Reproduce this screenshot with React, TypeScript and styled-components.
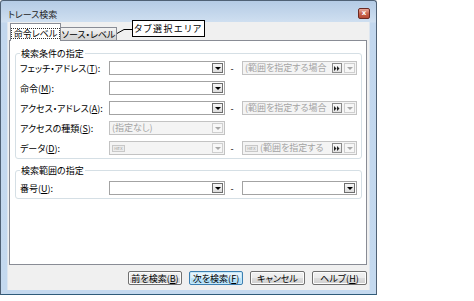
import React from "react";
import styled, { createGlobalStyle, css } from "styled-components";

const Global = createGlobalStyle`
  html, body { margin: 0; padding: 0; background: #fff; }
  body {
    font-family: "Noto Sans CJK JP", "Noto Sans", sans-serif;
    font-size: 9px;
    line-height: 11px;
    color: #000;
    font-feature-settings: "palt";
  }
`;

const Page = styled.div`
  position: relative;
  width: 474px;
  height: 301px;
  overflow: hidden;
`;

const Window = styled.div`
  width: 377px;
  height: 295px;
  box-sizing: border-box;
  border: 1px solid #4f6175;
  border-bottom-color: #2f5b7a;
  border-radius: 3px 3px 0 0;
  background: linear-gradient(#b4cbe5 0, #cfdff0 21px, #c2d7ee 22px, #c4d9ef 100%);
  display: flex;
  flex-direction: column;
  padding: 0 6px 4px 6px;
`;

const TitleBar = styled.div`
  height: 21px;
  display: flex;
  align-items: flex-start;
  justify-content: space-between;
  flex: none;
`;

const TitleText = styled.span`
  margin-top: 8px;
  margin-left: 1px;
  font-size: 9px;
  line-height: 11px;
  color: #1e1e1e;
`;

const CloseButton = styled.span`
  margin-top: 7px;
  width: 12px;
  height: 11px;
  box-sizing: border-box;
  border: 1px solid #6b2a22;
  border-radius: 2px;
  background: linear-gradient(#e9a99c, #c7604a 55%, #b64a34);
  display: flex;
  align-items: center;
  justify-content: center;
  color: #fff;
  font-family: "DejaVu Sans", sans-serif;
  font-size: 7px;
  line-height: 7px;
  font-weight: bold;
`;

const Client = styled.div`
  flex: 1;
  background: #f0f0f0;
  display: flex;
  flex-direction: column;
  box-shadow: inset 1px 0 0 #dde6f0, inset -1px 0 0 #dde6f0;
`;

const TabRow = styled.div`
  height: 19px;
  display: flex;
  align-items: flex-end;
  padding-left: 3px;
  position: relative;
  z-index: 1;
  flex: none;
`;

const Tab = styled.div<{ $active?: boolean }>`
  box-sizing: border-box;
  border: 1px solid #898c95;
  border-bottom: none;
  display: flex;
  align-items: center;
  justify-content: center;
  white-space: nowrap;
  ${(p) =>
    p.$active
      ? css`
          width: 51px;
          height: 18px;
          background: #fff;
          padding-top: 2px;
        `
      : css`
          width: 57px;
          height: 13px;
          margin-bottom: 1px;
          margin-left: -1px;
          background: linear-gradient(#f3f3f3, #e6e6e6 50%, #dadada 51%, #d4d4d4);
        `}
`;

const FocusRect = styled.span`
  border: 1px dotted #333;
  padding: 0 2px;
  line-height: 9px;
  height: 9px;
`;

const Panel = styled.div`
  height: 225px;
  margin: -1px 3px 0 2px;
  box-sizing: border-box;
  border: 1px solid #898c95;
  background: #fff;
  padding: 0 4px 0 5px;
  display: flex;
  flex-direction: column;
  flex: none;
`;

const Group = styled.fieldset<{ $top: number; $padTop: number }>`
  margin: ${(p) => p.$top}px 0 0 0;
  padding: ${(p) => p.$padTop}px 3px 3px 4px;
  border: 1px solid #d5dfe5;
  border-radius: 3px;
  min-width: 0;
  display: grid;
  grid-template-columns: 89px 116px 17px 115px;
  row-gap: 6px;
  align-items: center;
`;

const Legend = styled.legend`
  padding: 0 1px;
  margin-left: 0;
  line-height: 11px;
  font-size: 9px;
`;

const Label = styled.span`
  grid-column: 1;
  white-space: nowrap;
  line-height: 11px;
`;

const Dash = styled.span`
  grid-column: 3;
  text-align: center;
  padding-right: 3px;
  line-height: 11px;
`;

const ComboBox = styled.div<{ $disabled?: boolean; $col: number }>`
  grid-column: ${(p) => p.$col};
  height: 14px;
  box-sizing: border-box;
  border: 1px solid ${(p) => (p.$disabled ? "#c3c3c3" : "#a3a3a3")};
  background: ${(p) => (p.$disabled ? "#f4f4f4" : "#fff")};
  display: flex;
  align-items: center;
  padding: 0 1px 0 2px;
  gap: 1px;
`;

const ComboText = styled.span`
  flex: 1;
  color: #a3a3a3;
  white-space: nowrap;
  overflow: hidden;
  line-height: 12px;
`;

const DropButton = styled.span<{ $disabled?: boolean }>`
  width: 11px;
  height: 10px;
  box-sizing: border-box;
  flex: none;
  border: 1px solid ${(p) => (p.$disabled ? "#cfcfcf" : "#6e6e6e")};
  background: ${(p) => (p.$disabled ? "#f7f7f7" : "linear-gradient(#f6f6f6, #dcdcdc)")};
  display: flex;
  align-items: center;
  justify-content: center;
  &::after {
    content: "";
    border-left: 3px solid transparent;
    border-right: 3px solid transparent;
    border-top: 3px solid ${(p) => (p.$disabled ? "#a8a8a8" : "#000")};
  }
`;

const RangeButton = styled.span`
  width: 10px;
  height: 10px;
  box-sizing: border-box;
  flex: none;
  border: 1px solid #8a8a8a;
  background: linear-gradient(#fafafa, #e2e2e2);
  display: flex;
  align-items: center;
  justify-content: center;
  margin-right: 1px;
`;

const HexBadge = styled.span`
  flex: none;
  width: 13px;
  height: 7px;
  box-sizing: border-box;
  border: 1px solid #c8c8c8;
  background: #ececec;
  color: #a0a0a0;
  font-family: "DejaVu Sans", sans-serif;
  font-size: 4px;
  line-height: 5px;
  text-align: center;
  margin-right: 1px;
`;

const ButtonRow = styled.div`
  display: flex;
  justify-content: flex-end;
  gap: 7px;
  margin-top: 6px;
  padding-right: 3px;
  flex: none;
`;

const Button = styled.button<{ $default?: boolean; $w: number }>`
  width: ${(p) => p.$w}px;
  height: 14px;
  box-sizing: border-box;
  padding: 0;
  margin: 0;
  font-family: inherit;
  font-size: 9px;
  line-height: 11px;
  color: #000;
  border-radius: 2px;
  border: 1px solid ${(p) => (p.$default ? "#3c7fb1" : "#707070")};
  background: ${(p) =>
    p.$default
      ? "linear-gradient(#eaf6fd, #d9f0fc 50%, #bee6fd 51%, #a7d9f5)"
      : "linear-gradient(#f2f2f2, #ebebeb 50%, #dddddd 51%, #cfcfcf)"};
  box-shadow: inset 0 0 0 1px ${(p) => (p.$default ? "#c7e8f8" : "#fcfcfc")};
  font-feature-settings: "palt";
`;

const Callout = styled.div`
  position: absolute;
  left: 132px;
  top: 20px;
  width: 73px;
  height: 17px;
  box-sizing: border-box;
  border: 1px solid #000;
  background: #fff;
  display: flex;
  align-items: center;
  justify-content: center;
  letter-spacing: 1.5px;
  font-size: 9px;
  z-index: 5;
`;

const CalloutLine = styled.svg`
  position: absolute;
  left: 116px;
  top: 26px;
  z-index: 5;
`;

type ComboProps = {
  col: number;
  disabled?: boolean;
  text?: string;
  hex?: boolean;
  range?: boolean;
};

const Combo = ({ col, disabled, text, hex, range }: ComboProps) => (
  <ComboBox $col={col} $disabled={disabled}>
    {hex && <HexBadge>HEX</HexBadge>}
    <ComboText>{text}</ComboText>
    {range && (
      <RangeButton>
        <svg width="6" height="5" viewBox="0 0 6 5">
          <path d="M0 0 L2.5 2.5 L0 5 Z M3 0 L5.5 2.5 L3 5 Z" fill="#222" />
        </svg>
      </RangeButton>
    )}
    <DropButton $disabled={disabled || range} />
  </ComboBox>
);

const RangeCombo = ({ hex }: { hex?: boolean }) => (
  <Combo col={4} disabled range hex={hex} text={hex ? "(範囲を指定する" : "(範囲を指定する場合"} />
);

export default function App() {
  return (
    <Page>
      <Global />
      <Window>
        <TitleBar>
          <TitleText>トレース検索</TitleText>
          <CloseButton>x</CloseButton>
        </TitleBar>
        <Client>
          <TabRow>
            <Tab $active>
              <FocusRect>命令レベル</FocusRect>
            </Tab>
            <Tab>ソース・レベル</Tab>
          </TabRow>
          <Panel>
            <Group $top={7} $padTop={2}>
              <Legend>検索条件の指定</Legend>
              <Label>
                フェッチ・アドレス(<u>T</u>):
              </Label>
              <Combo col={2} />
              <Dash>-</Dash>
              <RangeCombo />

              <Label>
                命令(<u>M</u>):
              </Label>
              <Combo col={2} />

              <Label>
                アクセス・アドレス(<u>A</u>):
              </Label>
              <Combo col={2} />
              <Dash>-</Dash>
              <RangeCombo />

              <Label>
                アクセスの種類(<u>S</u>):
              </Label>
              <Combo col={2} disabled text="(指定なし)" />

              <Label>
                データ(<u>D</u>):
              </Label>
              <Combo col={2} disabled hex />
              <Dash>-</Dash>
              <RangeCombo hex />
            </Group>
            <Group $top={6} $padTop={5}>
              <Legend>検索範囲の指定</Legend>
              <Label>
                番号(<u>U</u>):
              </Label>
              <Combo col={2} />
              <Dash>-</Dash>
              <Combo col={4} />
            </Group>
          </Panel>
          <ButtonRow>
            <Button $w={54}>
              前を検索(<u>B</u>)
            </Button>
            <Button $w={54} $default>
              次を検索(<u>F</u>)
            </Button>
            <Button $w={55}>キャンセル</Button>
            <Button $w={55}>
              ヘルプ(<u>H</u>)
            </Button>
          </ButtonRow>
        </Client>
      </Window>
      <CalloutLine width="18" height="10" viewBox="0 0 18 10">
        <polyline points="1,7.5 8,3.5 16,3.5" fill="none" stroke="#000" strokeWidth="1" />
      </CalloutLine>
      <Callout>タブ選択エリア</Callout>
    </Page>
  );
}
